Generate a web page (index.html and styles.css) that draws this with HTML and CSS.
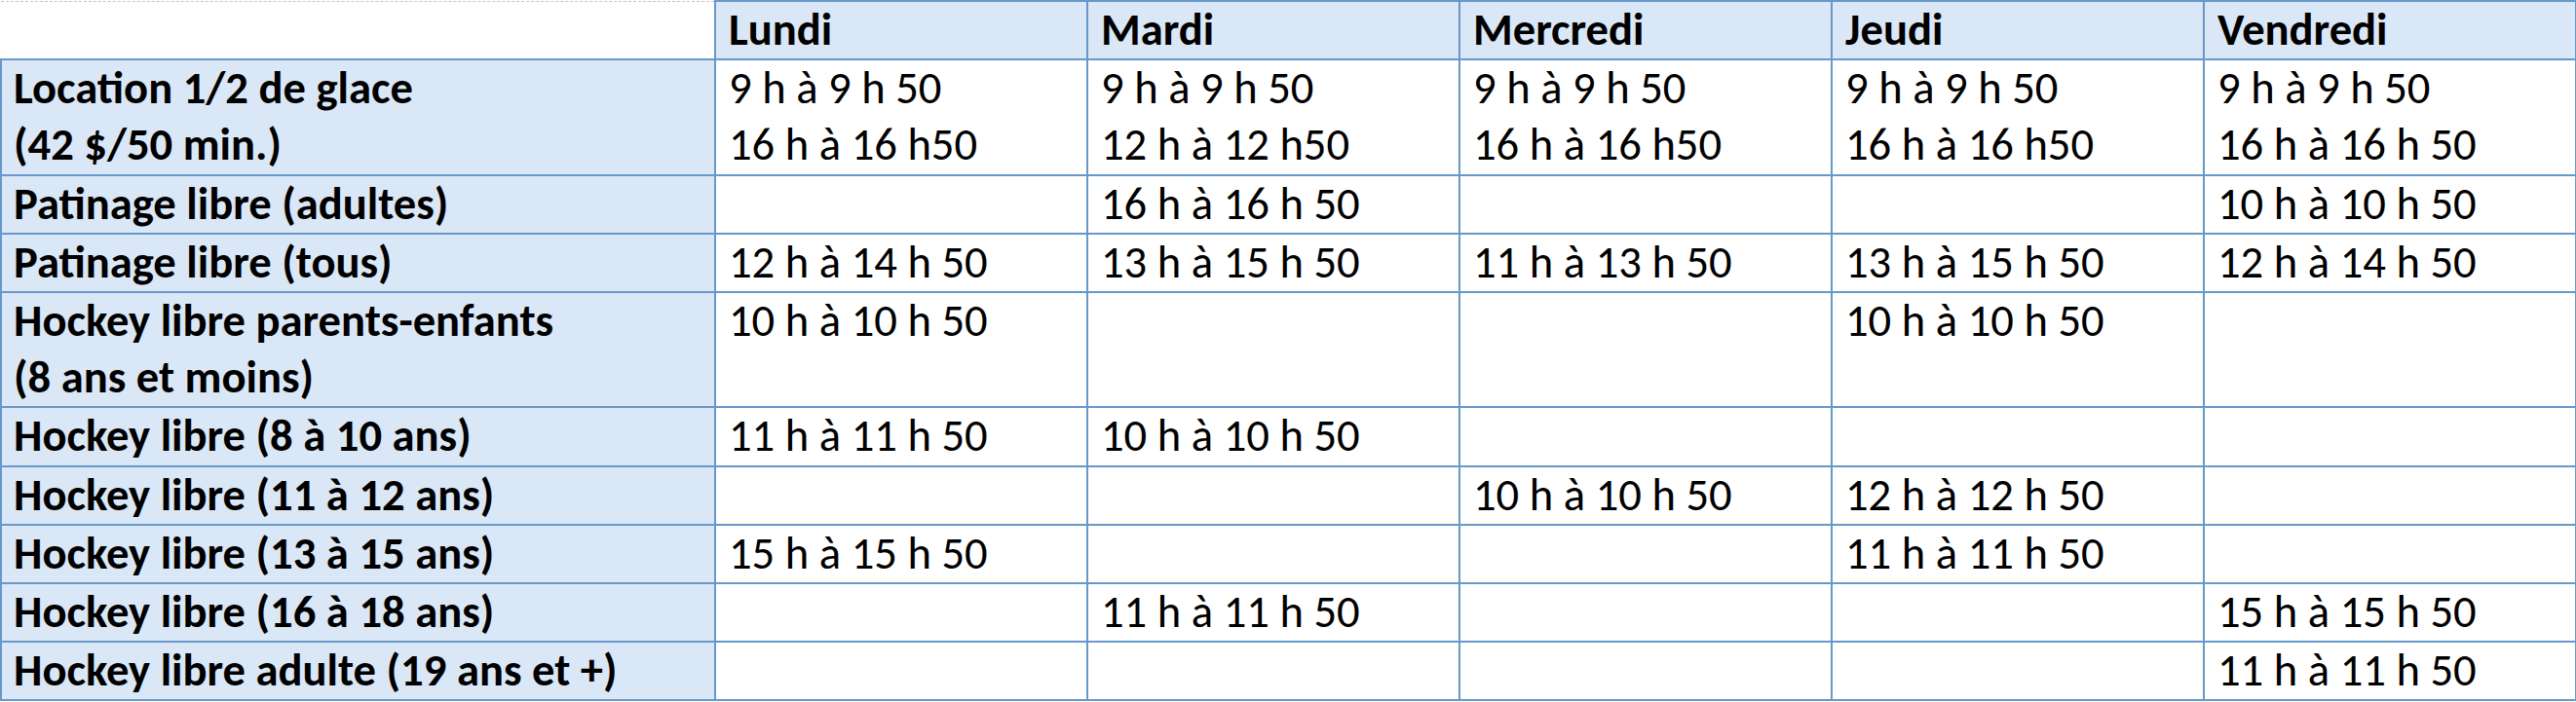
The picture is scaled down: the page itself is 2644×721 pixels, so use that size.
FILE: index.html
```html
<!DOCTYPE html>
<html lang="fr">
<head>
<meta charset="utf-8">
<link rel="stylesheet" href="styles.css">
</head>
<body>
<table class="horaire">
  <colgroup>
    <col class="c-label">
    <col class="c-day"><col class="c-day"><col class="c-day"><col class="c-day"><col class="c-day">
  </colgroup>
  <thead>
    <tr>
      <th class="corner"></th>
      <th class="day">Lundi</th>
      <th class="day">Mardi</th>
      <th class="day">Mercredi</th>
      <th class="day">Jeudi</th>
      <th class="day">Vendredi</th>
    </tr>
  </thead>
  <tbody>
    <tr>
      <th class="label">Location 1/2 de glace<br>(42 $/50 min.)</th>
      <td>9 h à 9 h 50<br>16 h à 16 h50</td>
      <td>9 h à 9 h 50<br>12 h à 12 h50</td>
      <td>9 h à 9 h 50<br>16 h à 16 h50</td>
      <td>9 h à 9 h 50<br>16 h à 16 h50</td>
      <td>9 h à 9 h 50<br>16 h à 16 h 50</td>
    </tr>
    <tr>
      <th class="label">Patinage libre (adultes)</th>
      <td></td>
      <td>16 h à 16 h 50</td>
      <td></td>
      <td></td>
      <td>10 h à 10 h 50</td>
    </tr>
    <tr>
      <th class="label">Patinage libre (tous)</th>
      <td>12 h à 14 h 50</td>
      <td>13 h à 15 h 50</td>
      <td>11 h à 13 h 50</td>
      <td>13 h à 15 h 50</td>
      <td>12 h à 14 h 50</td>
    </tr>
    <tr>
      <th class="label">Hockey libre parents-enfants<br>(8 ans et moins)</th>
      <td>10 h à 10 h 50</td>
      <td></td>
      <td></td>
      <td>10 h à 10 h 50</td>
      <td></td>
    </tr>
    <tr>
      <th class="label">Hockey libre (8 à 10 ans)</th>
      <td>11 h à 11 h 50</td>
      <td>10 h à 10 h 50</td>
      <td></td>
      <td></td>
      <td></td>
    </tr>
    <tr>
      <th class="label">Hockey libre (11 à 12 ans)</th>
      <td></td>
      <td></td>
      <td>10 h à 10 h 50</td>
      <td>12 h à 12 h 50</td>
      <td></td>
    </tr>
    <tr>
      <th class="label">Hockey libre (13 à 15 ans)</th>
      <td>15 h à 15 h 50</td>
      <td></td>
      <td></td>
      <td>11 h à 11 h 50</td>
      <td></td>
    </tr>
    <tr>
      <th class="label">Hockey libre (16 à 18 ans)</th>
      <td></td>
      <td>11 h à 11 h 50</td>
      <td></td>
      <td></td>
      <td>15 h à 15 h 50</td>
    </tr>
    <tr>
      <th class="label">Hockey libre adulte (19 ans et +)</th>
      <td></td>
      <td></td>
      <td></td>
      <td></td>
      <td>11 h à 11 h 50</td>
    </tr>
  </tbody>
</table>
</body>
</html>
```
FILE: styles.css
```css
html, body {
  margin: 0;
  padding: 0;
  background: #ffffff;
}

.horaire {
  border-collapse: collapse;
  table-layout: fixed;
  width: 2644px;
  font-family: "Carlito", "Liberation Sans Narrow", "Liberation Sans", sans-serif;
  font-size: 46.6px;
  line-height: 58.2px;
  color: #000000;
}

.c-label { width: 733px; }
.c-day { width: 382px; }

.horaire th,
.horaire td {
  border: 2px solid #6698ca;
  padding: 0 0 0 13px;
  text-align: left;
  vertical-align: top;
  white-space: nowrap;
  overflow: hidden;
}

.horaire th {
  font-weight: bold;
}

.horaire td {
  font-weight: normal;
  background: #ffffff;
}

.horaire .day,
.horaire .label {
  background: #dae7f6;
}

.horaire .label {
  padding-left: 12px;
}

.horaire .corner {
  background: #ffffff;
  border-top: 1px dashed #c4c4c4;
  border-left: none;
}
```
